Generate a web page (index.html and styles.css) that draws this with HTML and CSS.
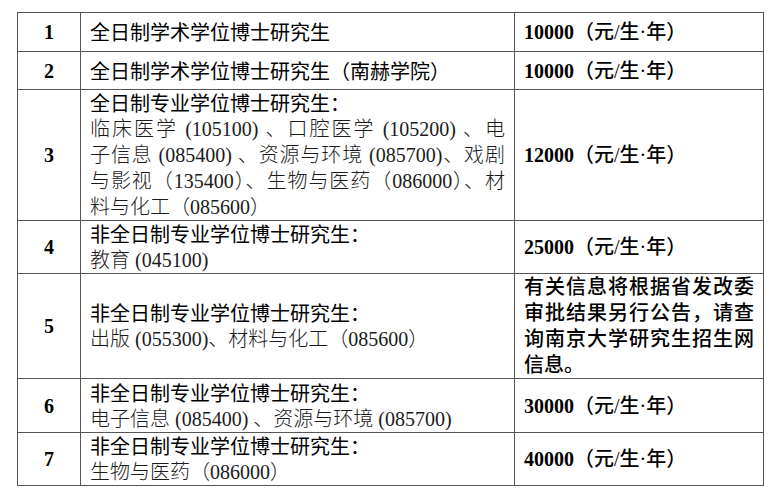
FILE: index.html
```html
<!DOCTYPE html>
<html lang="zh-CN">
<head>
<meta charset="utf-8">
<title>学费标准</title>
<link rel="stylesheet" href="styles.css">
</head>
<body>
<div class="page">
<table class="fees">
  <colgroup>
    <col class="c-no">
    <col class="c-type">
    <col class="c-fee">
  </colgroup>
  <tbody>
    <tr class="r1">
      <td class="no">1</td>
      <td class="type"><div class="head">全日制学术学位博士研究生</div></td>
      <td class="fee"><b>10000</b><span class="unit">（元/生·年）</span></td>
    </tr>
    <tr class="r2">
      <td class="no">2</td>
      <td class="type"><div class="head">全日制学术学位博士研究生（南赫学院）</div></td>
      <td class="fee"><b>10000</b><span class="unit">（元/生·年）</span></td>
    </tr>
    <tr class="r3">
      <td class="no">3</td>
      <td class="type">
        <div class="head">全日制专业学位博士研究生：</div>
        <div class="sub just">临床医学 (105100) 、口腔医学 (105200) 、电</div>
        <div class="sub just">子信息 (085400) 、资源与环境 (085700)、戏剧</div>
        <div class="sub just">与影视（135400）、生物与医药（086000）、材</div>
        <div class="sub">料与化工（085600）</div>
      </td>
      <td class="fee"><b>12000</b><span class="unit">（元/生·年）</span></td>
    </tr>
    <tr class="r4">
      <td class="no">4</td>
      <td class="type">
        <div class="head">非全日制专业学位博士研究生：</div>
        <div class="sub">教育 (045100)</div>
      </td>
      <td class="fee"><b>25000</b><span class="unit">（元/生·年）</span></td>
    </tr>
    <tr class="r5">
      <td class="no">5</td>
      <td class="type">
        <div class="head">非全日制专业学位博士研究生：</div>
        <div class="sub">出版 (055300)、材料与化工（085600）</div>
      </td>
      <td class="fee note">
        <div class="just">有关信息将根据省发改委</div>
        <div class="just">审批结果另行公告，请查</div>
        <div class="just">询南京大学研究生招生网</div>
        <div>信息。</div>
      </td>
    </tr>
    <tr class="r6">
      <td class="no">6</td>
      <td class="type">
        <div class="head">非全日制专业学位博士研究生：</div>
        <div class="sub">电子信息 (085400) 、资源与环境 (085700)</div>
      </td>
      <td class="fee"><b>30000</b><span class="unit">（元/生·年）</span></td>
    </tr>
    <tr class="r7">
      <td class="no">7</td>
      <td class="type">
        <div class="head">非全日制专业学位博士研究生：</div>
        <div class="sub">生物与医药（086000）</div>
      </td>
      <td class="fee"><b>40000</b><span class="unit">（元/生·年）</span></td>
    </tr>
  </tbody>
</table>
</div>
</body>
</html>
```

FILE: styles.css
```css
html, body {
  margin: 0;
  padding: 0;
  background: #ffffff;
}

.page {
  padding: 12px 0 0 17px;
}

.fees {
  border-collapse: collapse;
  table-layout: fixed;
  width: 746px;
  font-size: 20px;
  line-height: 26px;
  color: #000;
}

.c-no { width: 63px; }
.c-type { width: 434px; }
.c-fee { width: 249px; }

.fees td {
  border: 1px solid #555;
  padding: 0 9px;
  vertical-align: middle;
}

.r1 { height: 39px; }
.r2 { height: 38px; }
.r3 { height: 131px; }
.r4 { height: 53px; }
.r5 { height: 104px; }
.r6 { height: 54px; }
.r7 { height: 52px; }

.no {
  text-align: center;
  font-family: "Liberation Serif", serif;
  font-weight: 700;
}

.head {
  font-family: "Noto Sans CJK SC", sans-serif;
  font-weight: 400;
  color: #000;
}

.sub {
  font-family: "Liberation Serif", "Noto Sans CJK SC", serif;
  font-weight: 300;
  color: #1a1a1a;
}

.just {
  text-align: justify;
  text-align-last: justify;
}

.fee {
  font-family: "Liberation Serif", "Noto Sans CJK SC", serif;
}

.fee b {
  font-weight: 700;
}

.unit {
  font-weight: 500;
}

.note {
  font-weight: 500;
}
```
